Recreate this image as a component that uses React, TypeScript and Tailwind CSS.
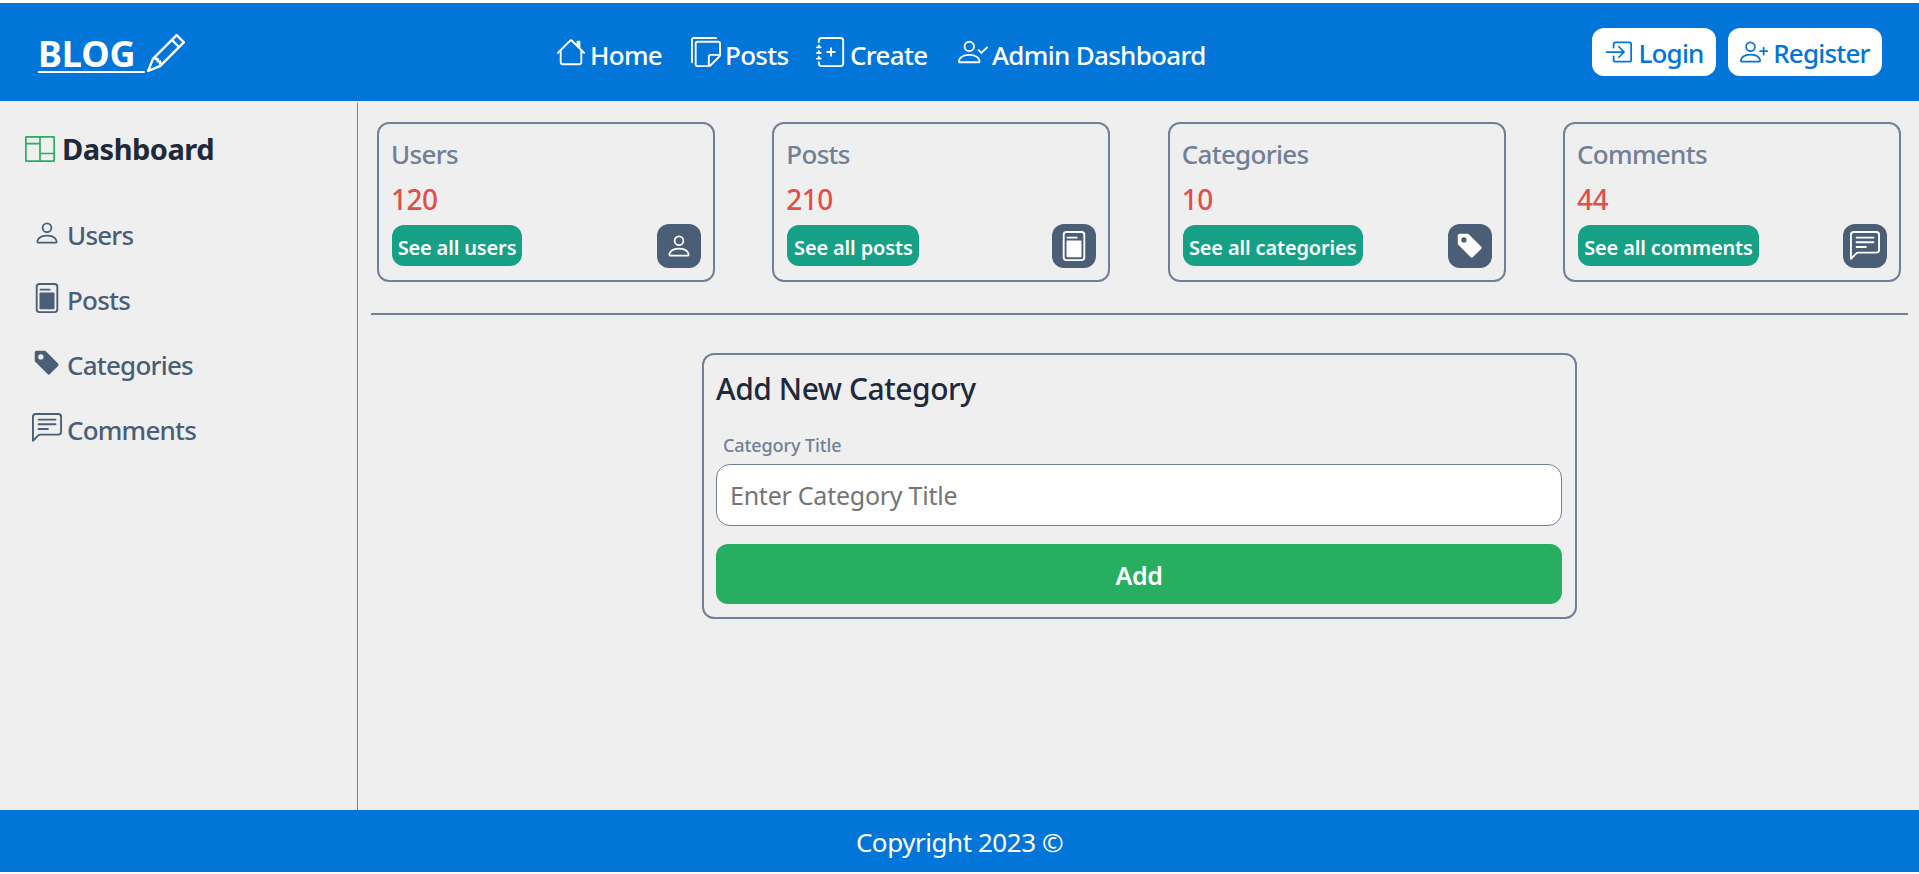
import React from "react";
import {
  BsBoxArrowInRight,
  BsChatLeftText,
  BsFilePost,
  BsHouse,
  BsJournalPlus,
  BsPencil,
  BsPerson,
  BsPersonPlus,
  BsStickies,
  BsTagFill,
} from "react-icons/bs";

const font = { fontFamily: '"Noto Sans", "Open Sans", sans-serif' };

function LayoutIcon() {
  return (
    <svg width="30" height="26" viewBox="0 0 30 26" fill="none" stroke="#27ae60" strokeWidth="1.7" className="shrink-0">
      <rect x="0.85" y="0.85" width="28.3" height="24.3" rx="0.5" />
      <path d="M15 1V25M1 7.6H15M15 17.5H29" />
    </svg>
  );
}

function PersonCheck({ size, className }: { size: number; className?: string }) {
  return (
    <svg width={size} height={size} viewBox="0 0 16 16" fill="currentColor" className={className}>
      <path d="M6 8a3 3 0 1 0 0-6 3 3 0 0 0 0 6zm2-3a2 2 0 1 1-4 0 2 2 0 0 1 4 0zm4 8c0 1-1 1-1 1H1s-1 0-1-1 1-4 6-4 6 3 6 4zm-1-.004c-.001-.246-.154-.986-.832-1.664C9.516 10.68 8.289 10 6 10c-2.29 0-3.516.68-4.168 1.332-.678.678-.83 1.418-.832 1.664h10z" />
      <path fillRule="evenodd" d="M15.854 5.146a.5.5 0 0 1 0 .708l-3 3a.5.5 0 0 1-.708 0l-1.5-1.5a.5.5 0 0 1 .708-.708L12.5 7.793l2.646-2.647a.5.5 0 0 1 .708 0z" />
    </svg>
  );
}

const navItems = [
  { label: "Home", Icon: BsHouse, size: 30, extra: "", textW: "w-[71px]" },
  { label: "Posts", Icon: BsStickies, size: 30, extra: "", textW: "w-[61px]" },
  { label: "Create", Icon: BsJournalPlus, size: 30, extra: "", textW: "w-[76px]" },
  { label: "Admin Dashboard", Icon: PersonCheck, size: 30, extra: "ml-[2px]", textW: "w-[214px]" },
];

const sideItems = [
  { label: "Users", Icon: BsPerson, size: 28 },
  { label: "Posts", Icon: BsFilePost, size: 30 },
  { label: "Categories", Icon: BsTagFill, size: 28 },
  { label: "Comments", Icon: BsChatLeftText, size: 30 },
];

const cards = [
  { title: "Users", value: "120", link: "See all users", Icon: BsPerson, size: 28, w: "w-[130px]" },
  { title: "Posts", value: "210", link: "See all posts", Icon: BsFilePost, size: 30, w: "w-[132px]" },
  { title: "Categories", value: "10", link: "See all categories", Icon: BsTagFill, size: 28, w: "w-[180px]" },
  { title: "Comments", value: "44", link: "See all comments", Icon: BsChatLeftText, size: 30, w: "w-[181px]" },
];

export default function App() {
  return (
    <div style={font} className="flex h-[874px] flex-col overflow-hidden bg-white pt-[3px] pb-[2px]">
      <header className="flex h-[98px] shrink-0 items-center bg-[#0275d8] pr-[37px] pl-[38px] text-white">
        <a className="mt-[3px] flex w-[147px] items-center text-[36px] leading-none font-bold tracking-[-0.1px] whitespace-nowrap text-white underline decoration-2 underline-offset-[4px]">
          BLOG&nbsp;
          <BsPencil size={38} className="ml-[2px] -translate-y-px shrink-0" />
        </a>
        <nav className="ml-[371px] flex items-center gap-[30px]">
          {navItems.map(({ label, Icon, size, extra, textW }) => (
            <a key={label} className="flex items-center gap-[4px]">
              <Icon size={size} className={`shrink-0 ${extra}`} />
              <span className={`${textW} mt-[5px] text-[26px] leading-none font-medium tracking-[-0.7px] whitespace-nowrap`}>{label}</span>
            </a>
          ))}
        </nav>
        <div className="ml-auto flex items-center gap-[12px] text-[#0275d8]">
          <button className="flex h-[48px] w-[124px] items-center justify-center gap-[6px] rounded-[12px] bg-white text-[26px] font-medium tracking-[-0.8px]">
            <BsBoxArrowInRight size={28} />
            <span className="mt-[2px]">Login</span>
          </button>
          <button className="flex h-[48px] w-[154px] items-center justify-center gap-[5px] rounded-[12px] bg-white text-[26px] font-medium tracking-[-0.8px]">
            <BsPersonPlus size={28} />
            <span className="mt-[2px]">Register</span>
          </button>
        </div>
      </header>

      <div className="flex min-h-0 flex-1 bg-[#efefef] pt-[2px]">
        <aside className="w-[358px] shrink-0 border-r border-[#718096] pl-[25px]">
          <div className="mt-[28px] flex items-center gap-[7px] text-[#1e293b]">
            <LayoutIcon />
            <span className="text-[29px] leading-[36px] font-bold tracking-[-0.5px]">Dashboard</span>
          </div>
          <ul className="-ml-[25px] mt-[50px] flex flex-col gap-[29px] text-[#4a5e78]">
            {sideItems.map(({ label, Icon, size }) => (
              <li key={label} className="ml-[29px] flex h-[36px] items-center gap-[2px]">
                <span className="-mt-[5px] flex w-[36px] shrink-0 justify-center">
                  <Icon size={size} />
                </span>
                <span className="text-[26px] leading-none font-medium tracking-[-0.8px]">{label}</span>
              </li>
            ))}
          </ul>
        </aside>

        <main className="min-w-0 flex-1 pt-[19px] pl-[13px]">
          <div className="w-[1537px]">
            <div className="flex w-[1536px] justify-between px-[6px]">
              {cards.map(({ title, value, link, Icon, size, w }) => (
                <div key={title} className="flex h-[160px] w-[338px] flex-col rounded-[12px] border-2 border-[#718096] pt-[12px] pr-[12px] pl-[13px]">
                  <h3 className="-ml-px text-[26px] leading-[36px] font-medium tracking-[-0.7px] text-[#718096]">{title}</h3>
                  <p className="mt-[9px] -ml-px text-[28px] leading-[36px] font-medium tracking-[-0.5px] text-[#e0504a]">{value}</p>
                  <div className="mt-[7px] flex items-start justify-between">
                    <a className={`${w} mt-px flex h-[41px] items-center justify-center rounded-[12px] bg-[#16a085] pt-[4px] text-[20px] font-semibold tracking-[-0.15px] whitespace-nowrap text-white`}>{link}</a>
                    <span className="flex h-[44px] w-[44px] items-center justify-center rounded-[12px] bg-[#4a5e78] text-white">
                      <Icon size={size} />
                    </span>
                  </div>
                </div>
              ))}
            </div>
            <hr className="mt-[31px] border-t-2 border-[#718096]" />
          </div>

          <form className="mt-[38px] ml-[331px] w-[875px] rounded-[12px] border-2 border-[#718096] pt-[13px] pr-[13px] pb-[13px] pl-[12px]">
            <h2 className="text-[30px] leading-[42px] font-medium tracking-[-0.45px] text-[#1e293b]">Add New Category</h2>
            <label className="mt-[23px] block pl-[7px] text-[18px] leading-[24px] font-medium tracking-[-0.1px] text-[#718096]">Category Title</label>
            <input
              placeholder="Enter Category Title"
              className="mt-[7px] block h-[62px] w-full rounded-[14px] border border-[#718096] bg-white px-[13px] text-[25px] tracking-[-0.25px] outline-none placeholder:text-[#757575]"
            />
            <button type="button" className="mt-[18px] block h-[60px] w-full rounded-[12px] bg-[#27ae60] pt-[3px] text-[25px] font-semibold tracking-[-0.3px] text-white">
              Add
            </button>
          </form>
        </main>
      </div>

      <footer className="flex h-[62px] shrink-0 items-center justify-center bg-[#0275d8] pt-[2px] text-[26px] tracking-[-0.45px] text-white">
        Copyright 2023 ©
      </footer>
    </div>
  );
}
